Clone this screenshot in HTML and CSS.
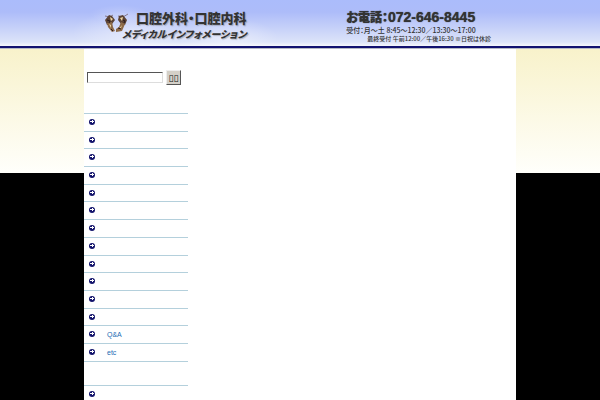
FILE: index.html
```html
<!DOCTYPE html>
<html lang="ja">
<head>
<meta charset="utf-8">
<title>口腔外科・口腔内科 メディカルインフォメーション</title>
<link rel="stylesheet" href="styles.css">
</head>
<body>
<header class="header">
  <div class="header-inner">
    <div class="brand">
      <svg class="logo" viewBox="0 0 24 22" aria-hidden="true">
        <path d="M1 4l5 1 3-2M14 4l5 1 5-3" fill="none" stroke="#85788a" stroke-width="1"/>
        <path d="M5 3l3 1 3 4-3 4-5 1-2-5zM15 4l4-1 4 5-2 5-4-1-3-4z" fill="#5b4335"/>
        <path d="M3 11l5-1 1 5 2 4-3 1-4-5zM17 10l4 2-3 7-6 1v-3l3-2z" fill="#8b6948"/>
        <path d="M6 5l3 2-2 2zM16 6l3-1-1 4zM5 12l2 1v3zM18 13l-1 3-2 1z" fill="#f0d8a4"/>
        <path d="M3 8l3 1-1 2M19 8l2 1-1 2M7 17l2 2M14 16l3 1" fill="none" stroke="#2b1c20" stroke-width="1"/>
      </svg>
      <h1 class="names">
        <span class="name">口腔外科・口腔内科</span>
        <span class="subname">メディカルインフォメーション</span>
      </h1>
    </div>
    <div class="contact">
      <p class="phone"><span class="phone-label">お電話：</span>072-646-8445</p>
      <p class="hours">受付：月～土 8:45～12:30／13:30～17:00</p>
      <p class="last">最終受付 午前12:00／午後16:30 ※日祝は休診</p>
    </div>
  </div>
</header>
<div class="backdrop">
  <main class="page">
    <aside class="side">
      <form class="search">
        <input class="search-box" type="text" aria-label="検索">
        <button class="search-button" type="button" aria-label="検索">▯▯</button>
      </form>
      <ul class="menu">
        <li><a href="#"></a></li>
        <li><a href="#"></a></li>
        <li><a href="#"></a></li>
        <li><a href="#"></a></li>
        <li><a href="#"></a></li>
        <li><a href="#"></a></li>
        <li><a href="#"></a></li>
        <li><a href="#"></a></li>
        <li><a href="#"></a></li>
        <li><a href="#"></a></li>
        <li><a href="#"></a></li>
        <li><a href="#"></a></li>
        <li><a href="#">Q&amp;A</a></li>
        <li><a href="#">etc</a></li>
      </ul>
      <ul class="menu menu-more">
        <li><a href="#"></a></li>
      </ul>
    </aside>
  </main>
</div>
</body>
</html>
```
FILE: styles.css
```css
* { box-sizing: border-box; }

html { background: #000; }

body {
  margin: 0;
  min-height: 100vh;
  display: flex;
  flex-direction: column;
  overflow: hidden;
  font-family: "Liberation Sans", "Noto Sans CJK JP", sans-serif;
  color: #333;
}

h1, p, ul { margin: 0; padding: 0; }

.header {
  border-bottom: 1px solid #b5b8c4;
  background: linear-gradient(#abbcfb, #adbcf9 12px, #dce3f9 42px, #f4f6fb 46px);
}

.header-inner {
  height: 48px;
  padding: 0 14%;
  display: flex;
  justify-content: space-between;
  border-bottom: 2px solid #111170;
  background:
    radial-gradient(ellipse 30px 9px at 20% 14px, #ffffff33, #ffffff00),
    radial-gradient(ellipse 60px 22px at 22% 32px, #ffffff66, #ffffff00),
    radial-gradient(ellipse 50px 20px at 38% 38px, #ffffff66, #ffffff00);
}

.brand {
  display: flex;
  padding: 9px 0 0 20px;
}

.logo { width: 24px; height: 28px; }

.names {
  display: flex;
  flex-direction: column;
  align-items: flex-end;
  margin-left: -6px;
  text-shadow: 1px 1px 1px #7777;
  font-feature-settings: "palt";
  font-weight: 900;
  font-family: "Noto Sans CJK JP", sans-serif;
}

.name { font-size: 13px; line-height: 17px; }

.subname { font-size: 10px; line-height: 16px; font-style: italic; }

.contact {
  padding: 8px 25px 0 0;
  font-family: "Noto Sans CJK JP", sans-serif;
  font-feature-settings: "palt";
  white-space: nowrap;
}

.phone {
  display: flex;
  font-family: "Liberation Sans", sans-serif;
  font-weight: 700;
  font-size: 14px;
  line-height: 18px;
  text-shadow: 0 0 1px #333;
}

.phone-label {
  font-family: "Noto Sans CJK JP", sans-serif;
  font-weight: 900;
  font-size: 12px;
}

.hours { font-size: 7px; line-height: 9px; font-weight: 500; }

.last { padding-left: 21px; font-size: 6px; line-height: 8px; font-weight: 500; }

.backdrop {
  flex: 1;
  background: linear-gradient(#f8f2cb, #fffffb 124px, #000 124px);
}

.page {
  width: 72%;
  min-height: 100%;
  margin: 0 auto;
  background: #fff;
}

.side { width: 104px; padding-top: 21px; }

.search {
  display: flex;
  gap: 3px;
  padding-left: 3px;
  margin-bottom: 28px;
}

.search-box {
  width: 76px;
  height: 11px;
  margin-top: 2px;
  padding: 0 2px;
  border: 1px solid #ddd;
  border-top-color: #555;
  border-left-color: #555;
  font-size: 8px;
  background: #fff;
}

.search-button {
  display: flex;
  align-items: center;
  justify-content: center;
  width: 15px;
  height: 15px;
  padding: 0;
  border: 1px solid #555;
  border-top-color: #eee;
  border-left-color: #eee;
  background: #d4d0c8;
  color: #111;
  font: 9px/12px "DejaVu Sans", sans-serif;
}

.menu {
  display: grid;
  grid-auto-rows: 18px 17px 18px 18px 17px 18px 18px;
  list-style: none;
  border-top: 1px solid #b4d0dc;
}

.menu-more { margin-top: 23px; }

.menu a {
  display: flex;
  align-items: center;
  height: 100%;
  padding: 0 0 1px 5px;
  gap: 12px;
  border-bottom: 1px solid #b4d0dc;
  color: #1c6cb4;
  font-size: 7px;
  text-decoration: none;
}

.menu a::before {
  content: "";
  width: 6px;
  height: 6px;
  border-radius: 50%;
  background:
    linear-gradient(#fff, #fff) 1px 2px / 4px 1px no-repeat,
    linear-gradient(#fff, #fff) 3px 1px / 1px 3px no-repeat,
    #14146c;
}
```
